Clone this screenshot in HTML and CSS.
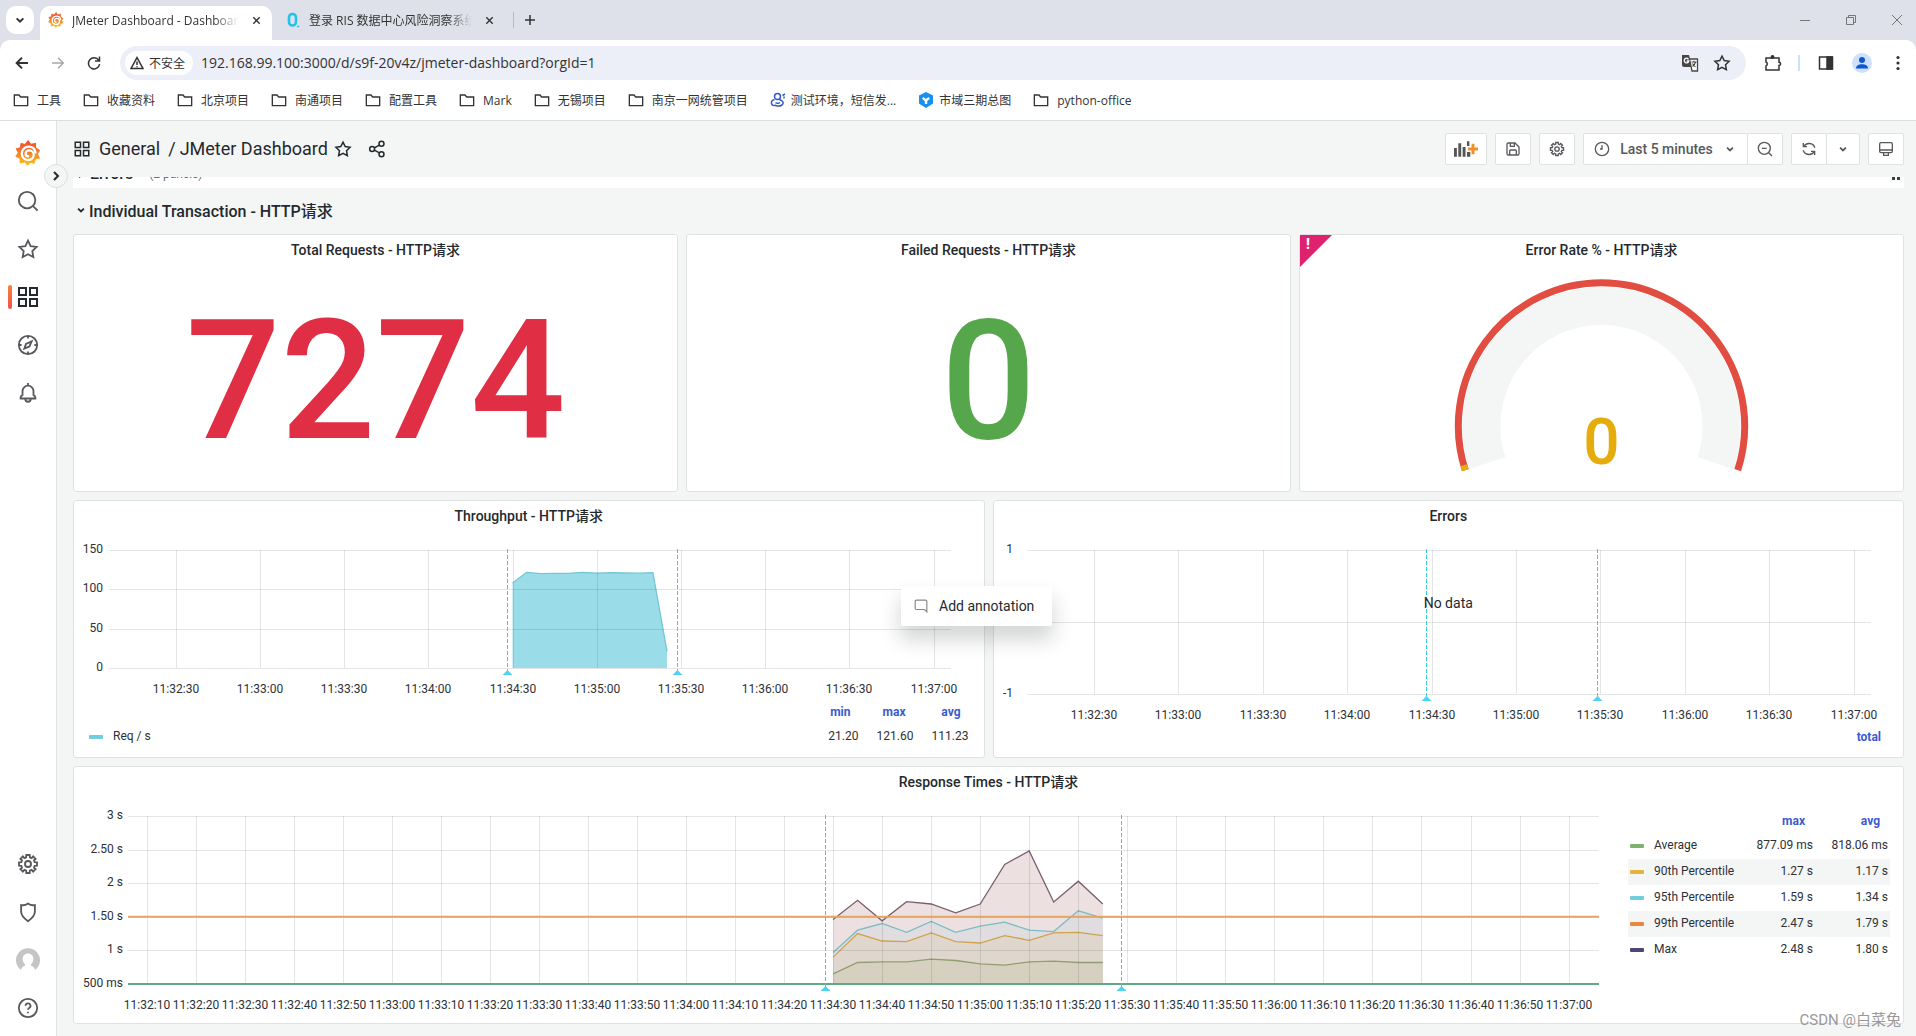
FILE: index.html
```html
<!DOCTYPE html>
<html lang="zh-CN">
<head>
<meta charset="utf-8">
<meta name="viewport" content="width=device-width, initial-scale=1">
<title>JMeter Dashboard - Dashboards - Grafana</title>
<link rel="stylesheet" href="styles.css">
</head>
<body>
<svg class="defs" aria-hidden="true">
  <defs>
    <linearGradient id="flame" x1="0" y1="0" x2="0" y2="1"><stop offset="0" stop-color="#e8502b"/><stop offset=".5" stop-color="#f37f2c"/><stop offset="1" stop-color="#fbc316"/></linearGradient>
    <symbol id="grafana" viewBox="0 0 24 24"><path fill="url(#flame)" stroke="url(#flame)" stroke-width="1" stroke-linejoin="round" d="M9.300 4.200 12.200.8 14.400 4 19 3.200 18.900 7.200 22.600 9.600 20.600 12.600 22.400 16.600 18.600 17.600 17.600 21.600 14.400 20.400 11.400 23.200 9.400 20 4.800 21.200 4.800 17 .9 15 3.200 11.800 1.200 8 5 7.200 5.600 3.200z"/><path fill="none" stroke="#fff" stroke-width="2.100" stroke-linecap="round" d="M19 11.600C18.300 7.800 15.400 6.200 12.700 6.200 8.800 6.200 6.300 9.300 6.300 12.500c0 3.500 2.600 6 5.800 6 3.100 0 5.200-2.300 5.200-4.800 0-2.600-2-4.200-4.200-4.200-1.900 0-3.300 1.500-3.300 3.100 0 1.500 1.100 2.400 2.300 2.400"/></symbol>
    <symbol id="search" viewBox="0 0 24 24"><circle cx="11" cy="11" r="9"/><path d="m17.500 17.500 5 5"/></symbol>
    <symbol id="star" viewBox="0 0 24 24"><path d="m12 2.800 2.900 6 6.500.9-4.700 4.600 1.100 6.500L12 17.700l-5.800 3.100 1.100-6.500L2.600 9.700l6.500-.9z"/></symbol>
    <symbol id="apps" viewBox="0 0 24 24"><path d="M3 3h7v7H3zM14 3h7v7h-7zM3 14h7v7H3zM14 14h7v7h-7z"/></symbol>
    <symbol id="compass" viewBox="0 0 24 24"><circle cx="12" cy="12" r="10"/><path d="M12 2v3M12 19v3M2 12h3M19 12h3M8 16l1.800-5.200L16 8l-2.400 5.600z"/></symbol>
    <symbol id="bell" viewBox="0 0 24 24"><path d="M12 1v3M6 15v-5a6 6 0 0 1 12 0v5M6 14.500a2.500 2.500 0 0 0-2 2.500V18h16v-1a2.500 2.500 0 0 0-2-2.500M9 18.500a3 3 0 0 0 6 0"/></symbol>
    <symbol id="cog" viewBox="0 0 24 24"><path d="M10.100 2.200 13.900 2.200 14 4.700 16 5.500 17.600 3.700 20.300 6.400 18.500 8 19.300 10 21.800 10.100 21.800 13.900 19.300 14 18.500 16 20.300 17.600 17.600 20.300 16 18.500 14 19.300 13.900 21.800 10.100 21.800 10 19.300 8 18.500 6.400 20.300 3.700 17.600 5.500 16 4.700 14 2.200 13.900 2.200 10.100 4.700 10 5.500 8 3.700 6.400 6.400 3.700 8 5.500 10 4.700z"/><circle cx="12" cy="12" r="3.300"/></symbol>
    <symbol id="shield" viewBox="0 0 24 24"><path d="M4.500 4.500c2.700.5 5.300-.1 7.500-1.700 2.200 1.600 4.800 2.200 7.500 1.700v7.300c0 4-2.800 7-7.500 10.200-4.700-3.200-7.500-6.200-7.500-10.200z"/></symbol>
    <symbol id="help" viewBox="0 0 24 24"><circle cx="12" cy="12" r="10"/><path d="M9.300 9.600a2.700 2.700 0 1 1 4 2.400c-.8.500-1.300.9-1.300 1.900M12 16.200v1.500"/></symbol>
    <symbol id="share" viewBox="0 0 24 24"><circle cx="5.500" cy="12" r="3.300"/><circle cx="18" cy="5" r="3.300"/><circle cx="18" cy="19" r="3.300"/><path d="m8.500 10.500 6.600-3.700M8.500 13.500l6.600 3.700"/></symbol>
    <symbol id="down" viewBox="0 0 24 24"><path d="m7 9.500 5 5 5-5"/></symbol>
    <symbol id="right" viewBox="0 0 24 24"><path d="m9 6 6 6-6 6"/></symbol>
    <symbol id="save" viewBox="0 0 24 24"><path d="M3 5a2 2 0 0 1 2-2h10l6 6v10a2 2 0 0 1-2 2H5a2 2 0 0 1-2-2zM8 3v5h6V3M7 21v-6a1.500 1.500 0 0 1 1.500-1.500h7A1.500 1.500 0 0 1 17 15v6"/></symbol>
    <symbol id="clock" viewBox="0 0 24 24"><circle cx="12" cy="12" r="10"/><path d="M12 6.500V12H9"/></symbol>
    <symbol id="zoomout" viewBox="0 0 24 24"><circle cx="11" cy="11" r="9"/><path d="m17.500 17.500 5 5M7.500 11h7"/></symbol>
    <symbol id="sync" viewBox="0 0 24 24"><path d="M3.500 3v5.500H9M4 8.500A9.200 9.200 0 0 1 20.800 10M20.500 21v-5.500H15M20 15.500A9.200 9.200 0 0 1 3.200 14"/></symbol>
    <symbol id="monitor" viewBox="0 0 24 24"><rect x="2.500" y="2.500" width="19" height="15" rx="2"/><path d="M2.500 13.500h19M8.500 17.500v4h7v-4"/></symbol>
    <symbol id="close" viewBox="0 0 24 24"><path d="m5 5 14 14M19 5 5 19"/></symbol>
    <symbol id="back" viewBox="0 0 24 24"><path d="M21 12H4M12 4l-8 8 8 8"/></symbol>
    <symbol id="folder" viewBox="0 0 24 24"><path d="M2 4.500h7l2.500 3H22v13H2z"/></symbol>
    <symbol id="comment" viewBox="0 0 24 24"><path d="M22 22l-4-4H4a2 2 0 0 1-2-2V4a2 2 0 0 1 2-2h16a2 2 0 0 1 2 2z"/></symbol>
  </defs>
</svg>

<header class="browser">
  <div class="tabstrip">
    <button class="tab-search" aria-label="搜索标签页"><svg class="icon i16 heavy"><use href="#down"/></svg></button>
    <div class="tab tab-active">
      <svg class="i16"><use href="#grafana"/></svg>
      <span class="tab-title">JMeter Dashboard - Dashboards - Grafana</span>
      <button class="bare" aria-label="关闭"><svg class="icon i11 heavy"><use href="#close"/></svg></button>
    </div>
    <div class="tab tab-idle">
      <svg class="i16" viewBox="0 0 16 16"><rect x="4" y="2" width="7" height="11.500" rx="3.500" fill="none" stroke="#20c4e8" stroke-width="2.600"/><circle cx="13.200" cy="14.500" r="1" fill="#20c4e8"/></svg>
      <span class="tab-title">登录 RIS 数据中心风险洞察系统</span>
      <button class="bare" aria-label="关闭"><svg class="icon i11 heavy"><use href="#close"/></svg></button>
    </div>
    <span class="tab-divider"></span>
    <button class="bare new-tab" aria-label="新标签页"><svg class="icon i12" viewBox="0 0 12 12"><path d="M6 1v10M1 6h10"/></svg></button>
    <div class="window-controls">
      <button class="bare" aria-label="最小化"><svg class="icon i12 thin" viewBox="0 0 12 12"><path d="M1 6.500h10"/></svg></button>
      <button class="bare" aria-label="还原"><svg class="icon i12 thin" viewBox="0 0 12 12"><path d="M1.500 3.500h7v7h-7zM3.500 3.500v-2h7v7h-2"/></svg></button>
      <button class="bare" aria-label="关闭窗口"><svg class="icon i12 thin" viewBox="0 0 12 12"><path d="m1 1 10 10M11 1 1 11"/></svg></button>
    </div>
  </div>
  <div class="navbar">
    <div class="nav-buttons">
      <button class="bare" aria-label="后退"><svg class="icon i16 heavy"><use href="#back"/></svg></button>
      <button class="bare faded" aria-label="前进"><svg class="icon i16 flip"><use href="#back"/></svg></button>
      <button class="bare" aria-label="重新加载"><svg class="icon i16" viewBox="0 0 16 16"><path d="M12.700 5.200A5.600 5.600 0 1 0 13.600 9M13.500 1.500V6H9"/></svg></button>
    </div>
    <div class="omnibox">
      <span class="security"><svg class="icon i14" viewBox="0 0 14 14"><path d="M7 1.600 13 12.500H1zM7 5.500v3.600M7 10.200v1.100"/></svg>不安全</span>
      <input class="url" type="text" aria-label="地址" value="192.168.99.100:3000/d/s9f-20v4z/jmeter-dashboard?orgId=1">
      <button class="bare" aria-label="翻译"><svg class="i18" viewBox="0 0 18 18"><path fill="#474747" d="M1 1h7l3 12H3a2 2 0 0 1-2-2z"/><path fill="#fff" stroke="#474747" stroke-width="1.300" d="M8.500 5h8v12H11z"/><path fill="none" stroke="#fff" stroke-width="1.300" d="M7.500 5.300A2.300 2.300 0 1 0 7.800 7H5.700"/><path fill="none" stroke="#474747" stroke-width="1.100" d="M10.500 8h5M13 6.800V8M14.500 8c-.5 2-1.600 3.500-3 4.500M11.500 9.500c.8 1.500 1.800 2.500 3 3.200"/></svg></button>
      <button class="bare" aria-label="收藏"><svg class="icon i18"><use href="#star"/></svg></button>
    </div>
    <div class="extensions">
      <button class="bare" aria-label="扩展程序"><svg class="icon i18" viewBox="0 0 18 18"><path d="M2 4h13v4.200a1.600 1.600 0 0 1 0 3.200V16H2v-4a2.200 2.200 0 0 0 0-4z"/><circle cx="8.500" cy="3" r="1.200" fill="currentColor"/></svg></button>
      <span class="tool-divider"></span>
      <button class="bare" aria-label="侧边栏"><svg class="icon i16" viewBox="0 0 16 16"><path d="M1.500 2h13v12h-13z"/><path fill="currentColor" d="M9 2h5v12H9z"/></svg></button>
      <button class="bare" aria-label="用户"><svg class="i20" viewBox="0 0 20 20"><circle cx="10" cy="10" r="10" fill="#cfe0fb"/><circle cx="10" cy="7" r="3" fill="#0b57d0"/><path fill="#0b57d0" d="M4 15.500c0-3 3-4.200 6-4.200s6 1.200 6 4.200z"/></svg></button>
      <button class="bare" aria-label="菜单"><svg class="i16" viewBox="0 0 16 16" fill="#333"><circle cx="8" cy="2.500" r="1.600"/><circle cx="8" cy="8" r="1.600"/><circle cx="8" cy="13.500" r="1.600"/></svg></button>
    </div>
  </div>
  <nav class="bookmarks" aria-label="书签">
    <a href="#"><svg class="icon i16"><use href="#folder"/></svg>工具</a>
    <a href="#"><svg class="icon i16"><use href="#folder"/></svg>收藏资料</a>
    <a href="#"><svg class="icon i16"><use href="#folder"/></svg>北京项目</a>
    <a href="#"><svg class="icon i16"><use href="#folder"/></svg>南通项目</a>
    <a href="#"><svg class="icon i16"><use href="#folder"/></svg>配置工具</a>
    <a href="#"><svg class="icon i16"><use href="#folder"/></svg>Mark</a>
    <a href="#"><svg class="icon i16"><use href="#folder"/></svg>无锡项目</a>
    <a href="#"><svg class="icon i16"><use href="#folder"/></svg>南京一网统管项目</a>
    <a class="site" href="#"><svg class="i16" viewBox="0 0 16 16" fill="none" stroke="#3656c9" stroke-width="1.500"><circle cx="7.500" cy="4.500" r="3"/><path d="M4.500 7.500C2 8 1 9.500 1.500 11.500S4 14 5.500 13.300c2 1 4.500 1 6.500-.3 1.500-1.200 1.500-3.200 0-4.200L9.500 7.500M5.500 10.500c1.500 1.200 3 1.200 4.500 0"/><path d="M12.500 3.500 15 2M14 4.500v2"/></svg>测试环境，短信发...</a>
    <a class="site" href="#"><svg class="i16" viewBox="0 0 16 16"><path fill="#1890f0" d="m8 0 7 3.500v8L8 16l-7-4.500v-8z"/><path fill="none" stroke="#fff" stroke-width="2.400" d="M8 12V8.500L4.800 5.800M8 8.500l3.200-2.700"/></svg>市域三期总图</a>
    <a href="#"><svg class="icon i16"><use href="#folder"/></svg>python-office</a>
  </nav>
</header>

<div class="app">
  <aside class="sidebar">
    <nav class="side-group">
      <a href="#" aria-label="Grafana"><svg class="i26"><use href="#grafana"/></svg></a>
      <a href="#" aria-label="Search"><svg class="icon i22"><use href="#search"/></svg></a>
      <a href="#" aria-label="Starred"><svg class="icon i22"><use href="#star"/></svg></a>
      <a class="current" href="#" aria-label="Dashboards"><svg class="icon i24"><use href="#apps"/></svg></a>
      <a href="#" aria-label="Explore"><svg class="icon i22"><use href="#compass"/></svg></a>
      <a href="#" aria-label="Alerting"><svg class="icon i22"><use href="#bell"/></svg></a>
    </nav>
    <nav class="side-group">
      <a href="#" aria-label="Configuration"><svg class="icon i22"><use href="#cog"/></svg></a>
      <a href="#" aria-label="Server admin"><svg class="icon i22"><use href="#shield"/></svg></a>
      <a href="#" aria-label="Profile"><svg class="i24" viewBox="0 0 24 24"><path fill="#c5c5c5" d="M5 22A12 12 0 1 1 19 22c-.5-2.500-1.700-3.500-4-4.200v-1.600c1.500-1.200 2.300-3 2.300-5.200 0-3.200-2-5.500-5.300-5.500S6.700 7.800 6.700 11c0 2.200.8 4 2.300 5.200v1.600C6.700 18.500 5.500 19.500 5 22z"/></svg></a>
      <a href="#" aria-label="Help"><svg class="icon i22"><use href="#help"/></svg></a>
    </nav>
    <button class="expand" aria-label="Expand menu"><svg class="icon i16 bold"><use href="#right"/></svg></button>
  </aside>

  <main class="dashboard">
    <div class="toolbar">
      <svg class="icon i18"><use href="#apps"/></svg>
      <h1 class="crumbs"><a href="#">General</a><span>/</span><a href="#">JMeter Dashboard</a></h1>
      <button class="bare" aria-label="Mark as favorite"><svg class="icon i18"><use href="#star"/></svg></button>
      <button class="bare share" aria-label="Share"><svg class="icon i18"><use href="#share"/></svg></button>
      <div class="actions">
        <button class="btn btn-add" aria-label="Add panel"><svg class="i24" viewBox="0 0 25 16"><path fill="#555" d="M0 7h3v9H0zM4.500 2h3v14h-3zM9 6h3v10H9zM13.500 0H16v5h-2.500zM13.500 11H17v5h-3.500z"/><path fill="#f0912b" d="M18.300 2.500h3v4H25v3h-3.700v4h-3v-4h-3.800v-3h3.800z"/></svg></button>
        <button class="btn" aria-label="Save dashboard"><svg class="icon i16"><use href="#save"/></svg></button>
        <button class="btn" aria-label="Dashboard settings"><svg class="icon i16"><use href="#cog"/></svg></button>
        <div class="btn-group">
          <button class="btn btn-time"><svg class="icon i16"><use href="#clock"/></svg><span>Last 5 minutes</span><svg class="icon i14 heavy"><use href="#down"/></svg></button>
          <button class="btn" aria-label="Zoom out"><svg class="icon i16"><use href="#zoomout"/></svg></button>
        </div>
        <div class="btn-group">
          <button class="btn" aria-label="Refresh"><svg class="icon i16"><use href="#sync"/></svg></button>
          <button class="btn btn-narrow" aria-label="Refresh interval"><svg class="icon i14 heavy"><use href="#down"/></svg></button>
        </div>
        <button class="btn" aria-label="Cycle view mode"><svg class="icon i16"><use href="#monitor"/></svg></button>
      </div>
    </div>

    <div class="scroll">
      <div class="row-collapsed"><svg class="icon i14"><use href="#right"/></svg><span class="row-name">Errors</span><span class="row-count">(2 panels)</span><span class="grip"><i></i><i></i><i></i><i></i></span></div>
      <button class="row-title"><svg class="icon i14 heavy"><use href="#down"/></svg>Individual Transaction - HTTP请求</button>

      <div class="panels thirds">
        <section class="panel">
          <h2>Total Requests - HTTP请求</h2>
          <p class="stat red">7274</p>
        </section>
        <section class="panel">
          <h2>Failed Requests - HTTP请求</h2>
          <p class="stat green">0</p>
        </section>
        <section class="panel">
          <span class="alert-corner">!</span>
          <h2>Error Rate % - HTTP请求</h2>
          <svg class="gauge" viewBox="0 0 300 224" role="img" aria-label="Error rate 0">
            <g fill="none" transform="translate(150 159)">
              <path stroke="#f4f5f5" stroke-width="38" d="M-114.100 37.100A120 120 0 1 1 114.100 37.100"/>
              <path stroke="#e24d42" stroke-width="7" d="M-136.200 44.200A143.200 143.200 0 1 1 136.200 44.200"/>
              <path stroke="#e5ac0e" stroke-width="7" d="M-136.200 44.200-137.700 39.300"/>
            </g>
            <text x="150" y="197" text-anchor="middle">0</text>
          </svg>
        </section>
      </div>

      <div class="panels halves">
        <section class="panel">
          <h2>Throughput - HTTP请求</h2>
          <svg class="chart chart-throughput" data-chart="throughput"></svg>
          <table class="legend legend-wide">
            <thead><tr><th></th><th>min</th><th>max</th><th>avg</th></tr></thead>
            <tbody><tr><td><span class="swatch teal"></span>Req / s</td><td>21.20</td><td>121.60</td><td>111.23</td></tr></tbody>
          </table>
        </section>
        <section class="panel">
          <h2>Errors</h2>
          <div class="chart-wrap">
            <svg class="chart chart-errors" data-chart="errors"></svg>
            <span class="no-data">No data</span>
          </div>
          <table class="legend legend-total">
            <thead><tr><th></th><th>total</th></tr></thead>
          </table>
        </section>
      </div>

      <div class="panels">
        <section class="panel">
          <h2>Response Times - HTTP请求</h2>
          <div class="split">
            <svg class="chart chart-response" data-chart="response"></svg>
            <table class="legend legend-side">
              <thead><tr><th></th><th>max</th><th>avg</th></tr></thead>
              <tbody>
                <tr><td><span class="swatch sage"></span>Average</td><td>877.09 ms</td><td>818.06 ms</td></tr>
                <tr><td><span class="swatch gold"></span>90th Percentile</td><td>1.27 s</td><td>1.17 s</td></tr>
                <tr><td><span class="swatch teal"></span>95th Percentile</td><td>1.59 s</td><td>1.34 s</td></tr>
                <tr><td><span class="swatch orange"></span>99th Percentile</td><td>2.47 s</td><td>1.79 s</td></tr>
                <tr><td><span class="swatch violet"></span>Max</td><td>2.48 s</td><td>1.80 s</td></tr>
              </tbody>
            </table>
          </div>
        </section>
      </div>
    </div>
  </main>
</div>

<div class="context-menu" role="menu">
  <button role="menuitem"><svg class="icon i14"><use href="#comment"/></svg>Add annotation</button>
</div>
<span class="credit">CSDN @白菜兔</span>
<script src="charts.js"></script>
</body>
</html>
```

FILE: styles.css
```css
* { box-sizing: border-box; }

body {
  margin: 0;
  min-height: 100vh;
  display: flex;
  flex-direction: column;
  position: relative;
  font-family: Roboto, "Noto Sans CJK SC", sans-serif;
  font-size: 14px;
  color: #24292e;
  background: #f4f5f5;
}

a { color: inherit; text-decoration: none; }
h1, h2, p { margin: 0; font-weight: 500; }
button { font: inherit; color: inherit; margin: 0; }
svg { display: block; flex: none; }

.defs { position: absolute; width: 0; height: 0; }
.icon { fill: none; stroke: currentColor; stroke-width: 2; }
.icon[viewBox] { stroke-width: 1.5; }
.icon.heavy { stroke-width: 3; }
.icon.bold { stroke-width: 3; }
.icon.thin { stroke-width: 1; }
.flip { transform: scaleX(-1); }
.i11 { width: 11px; height: 11px; }
.i12 { width: 12px; height: 12px; }
.i14 { width: 14px; height: 14px; }
.i16 { width: 16px; height: 16px; }
.i18 { width: 18px; height: 18px; }
.i20 { width: 20px; height: 20px; }
.i22 { width: 22px; height: 22px; }
.i24 { width: 24px; height: 24px; }
.i26 { width: 26px; height: 26px; }

.bare {
  border: 0;
  padding: 0;
  background: none;
  display: flex;
}

/* Browser frame */
.browser {
  font-family: "Open Sans", "Noto Sans CJK SC", sans-serif;
  font-size: 12px;
  color: #333;
  background: #dee1e9;
}
.tabstrip {
  display: flex;
  align-items: center;
  height: 40px;
  padding: 0 13px 0 6px;
}
.tab-search {
  width: 28px;
  height: 28px;
  display: grid;
  place-items: center;
  border: 0;
  border-radius: 10px;
  padding: 0;
  margin-right: 6px;
  background: #fff;
}
.tab {
  width: 232px;
  height: 34px;
  align-self: flex-end;
  display: flex;
  align-items: center;
  gap: 8px;
  padding: 0 10px 6px 8px;
}
.tab-active { background: #fff; border-radius: 10px 10px 0 0; }
.tab-idle { width: 228px; margin-left: 5px; }
.tab-title {
  flex: 1;
  overflow: hidden;
  white-space: nowrap;
  mask-image: linear-gradient(90deg, #000 85%, transparent);
}
.tab .bare { margin-left: 4px; }
.tab-divider { width: 1px; height: 16px; margin: 0 10px 0 8px; background: #b4b9c4; }
.window-controls { display: flex; gap: 34px; margin-left: auto; color: #777; }

.navbar {
  display: flex;
  align-items: center;
  height: 40px;
  padding: 6px 10px 0 14px;
  background: #fff;
  border-radius: 10px 10px 0 0;
}
.nav-buttons { display: flex; gap: 20px; }
.faded { color: #a5a5a5; }
.omnibox {
  flex: 1;
  display: flex;
  align-items: center;
  height: 34px;
  gap: 14px;
  margin: 0 18px;
  padding: 0 15px 0 5px;
  border-radius: 17px;
  background: #eceff8;
}
.security {
  display: flex;
  align-items: center;
  gap: 5px;
  height: 24px;
  padding: 0 8px 0 5px;
  border-radius: 12px;
  background: #fff;
}
.url {
  flex: 1;
  border: 0;
  padding: 0 0 2px;
  margin-left: -6px;
  font-family: inherit;
  font-size: 14px;
  color: #333;
  background: none;
}
.extensions { display: flex; align-items: center; gap: 18px; }
.tool-divider { width: 2px; height: 16px; margin-left: -2px; background: #cfe0fb; }
.bookmarks {
  display: flex;
  align-items: center;
  gap: 22px;
  height: 41px;
  padding: 0 13px;
  background: #fff;
  border-bottom: 1px solid #dcdfe0;
}
.bookmarks a { display: flex; align-items: center; gap: 8px; white-space: nowrap; }
.bookmarks .site { gap: 5px; }

/* Application frame */
.app { flex: 1; display: flex; }
.sidebar {
  position: relative;
  width: 57px;
  display: flex;
  flex-direction: column;
  justify-content: space-between;
  padding: 8px 0 4px;
  background: #fff;
  border-right: 1px solid #e0e2e3;
  color: #57595c;
}
.side-group a { display: grid; place-items: center; height: 48px; position: relative; }
.side-group .current { color: #24292e; }
.current::before {
  content: "";
  position: absolute;
  left: 8px;
  top: 12px;
  width: 4px;
  height: 24px;
  border-radius: 2px;
  background: linear-gradient(#f8813c, #f2524c);
}
.expand {
  position: absolute;
  top: 43px;
  right: -12px;
  width: 24px;
  height: 24px;
  display: grid;
  place-items: center;
  padding: 0;
  border: 1px solid #dcdfe0;
  border-radius: 50%;
  color: #24292e;
  background: #f4f5f5;
}
.dashboard { flex: 1; min-width: 0; padding: 0 12px 12px 16px; }
.toolbar { display: flex; align-items: center; height: 56px; }
.crumbs { display: flex; gap: 8px; margin: 0 6px 0 8px; padding-bottom: 2px; font-size: 18px; font-weight: 400; }
.crumbs span { margin-right: -4px; }
.share { margin-left: 16px; }
.actions { display: flex; gap: 8px; margin-left: auto; color: #57595c; }
.btn {
  width: 36px;
  height: 32px;
  display: flex;
  align-items: center;
  justify-content: center;
  gap: 10px;
  padding: 0;
  border: 1px solid #dfe1e2;
  border-radius: 2px;
  background: #fff;
  font-weight: 500;
}
.btn-group { display: flex; }
.btn-group .btn + .btn { margin-left: -1px; }
.btn-add { width: 42px; }
.btn-time { width: 165px; }
.btn-narrow { width: 34px; }

.scroll { overflow: hidden; }
.row-collapsed {
  display: flex;
  align-items: center;
  height: 31px;
  margin-top: -20px;
  padding: 2px 4px 0 1px;
  background: #fff;
}
.row-name { margin-left: 2px; font-size: 16px; font-weight: 500; }
.row-count { flex: 1; margin-left: 16px; font-size: 12px; color: #6a6d70; }
.grip { display: grid; grid-template-columns: 3px 3px; gap: 2px; margin-top: 4px; }
.grip i { width: 3px; height: 3px; background: #3b3e40; }
.row-title {
  display: flex;
  align-items: center;
  gap: 1px;
  height: 46px;
  padding: 0 1px 2px;
  border: 0;
  background: none;
  font-size: 16px;
  font-weight: 500;
}

.panels { display: grid; gap: 8px; margin-bottom: 8px; }
.panels:last-child { margin-bottom: 0; }
.thirds { grid-template-columns: repeat(3, 1fr); }
.halves { grid-template-columns: repeat(2, 1fr); }
.panel {
  position: relative;
  display: flex;
  flex-direction: column;
  min-width: 0;
  height: 258px;
  border: 1px solid #dfe2e3;
  border-radius: 3px;
  background: #fff;
}
.panel h2 { padding-bottom: 2px; font-size: 14px; line-height: 30px; text-align: center; }
.stat { padding-top: 2px; font-size: 167px; line-height: 224px; text-align: center; }
.red { color: #e02f44; }
.green { color: #56a64b; }
.gauge { width: 100%; height: 224px; }
.gauge text { font-size: 64px; font-weight: 500; fill: #e5ac0e; }
.alert-corner {
  position: absolute;
  left: 0;
  top: 0;
  width: 32px;
  height: 32px;
  padding-left: 6px;
  font-size: 14px;
  line-height: 18px;
  font-weight: 900;
  color: #fff;
  background: #e0226e;
  clip-path: polygon(0 0, 100% 0, 0 100%);
}

/* Charts */
.chart { width: 100%; }
.chart text { font-size: 12px; fill: #2c3136; }
.chart .tick { text-anchor: middle; }
.chart .value { text-anchor: end; }
.chart .grid { stroke: #000; stroke-opacity: .1; shape-rendering: crispEdges; }
.chart .event { stroke: #35cfe6; stroke-dasharray: 4 2; shape-rendering: crispEdges; }
.chart .event-mark { fill: #4bd5ee; }
.chart-throughput { height: 167px; }
.chart-errors { height: 190px; }
.chart-response { flex: 1; width: auto; min-width: 0; height: 223px; }
.chart-wrap { display: grid; place-items: center; }
.chart-wrap > * { grid-area: 1 / 1; }
.no-data { padding-bottom: 50px; }
.split { display: flex; gap: 14px; padding-right: 13px; }

.legend { border-collapse: collapse; font-size: 12px; line-height: 16px; color: #2c3136; }
.legend th, .legend td { padding: 4px 2px 6px; text-align: right; font-weight: 400; white-space: nowrap; }
.legend th { padding-right: 10px; font-weight: 700; color: #3a5bd0; }
.legend td:first-child { text-align: left; }
.legend-wide { margin: 0 13px; }
.legend-wide th, .legend-wide td { width: 55px; padding-top: 4px; padding-bottom: 4px; }
.legend-wide th:first-child, .legend-wide td:first-child { width: auto; }
.legend-total { margin: 2px 12px 0; }
.legend-side { flex: none; width: 262px; margin-top: 10px; align-self: flex-start; }
.legend-side th, .legend-side td { width: 75px; }
.legend-side th:first-child, .legend-side td:first-child { width: auto; }
.legend-side th { padding-top: 4px; padding-bottom: 4px; }
.legend-side tbody tr:nth-child(even) { background: #f4f5f5; }
.swatch {
  display: inline-block;
  width: 14px;
  height: 4px;
  margin-right: 10px;
  border-radius: 1px;
  vertical-align: 1px;
}
.teal { background: #70cddb; }
.sage { background: #7eb26d; }
.gold { background: #e5b43c; }
.orange { background: #ea8842; }
.violet { background: #51447a; }

/* Floating items */
.context-menu {
  position: absolute;
  left: 901px;
  top: 586px;
  border-radius: 2px;
  background: #fff;
  box-shadow: 0 13px 20px 1px rgba(24, 26, 27, .18);
}
.context-menu button {
  display: flex;
  align-items: center;
  gap: 11px;
  width: 151px;
  height: 40px;
  padding: 0 13px;
  border: 0;
  background: none;
  white-space: nowrap;
}
.context-menu svg { color: #858789; }
.credit {
  position: absolute;
  right: 15px;
  bottom: 4px;
  font-size: 15px;
  line-height: 24px;
  color: #999;
}
```

FILE: charts.js
```js
const NS = "http://www.w3.org/2000/svg";

// Seconds are counted from the left edge of the five-minute window.
const WINDOW = 300;
const START = 11 * 3600 + 32 * 60 + 6.2;
const FIRST_SAMPLE = 143.8;
const EVENTS = [142.3, 202.8];

const charts = {
  throughput: {
    left: 35, right: 33, top: 17, bottom: 135, labelGap: 6,
    min: 0, max: 150, step: 30,
    values: [[150, "150"], [100, "100"], [50, "50"], [0, "0"]],
    series: [
      { fill: "#9adde9", line: "#74c6d4", data: [108, 121.6, 120, 120.2, 120.4, 121.5, 120.6, 121.2, 120.8, 120.5, 121.3, 21.2] }
    ]
  },
  errors: {
    left: 33, right: 33, top: 17, bottom: 161, labelGap: 14,
    min: -1, max: 1, step: 30,
    values: [[1, "1"], [0, ""], [-1, "-1"]],
    series: []
  },
  response: {
    left: 54, right: 15, top: 17, bottom: 185, labelGap: 5,
    min: 0.5, max: 3, step: 10,
    values: [[3, "3 s"], [2.5, "2.50 s"], [2, "2 s"], [1.5, "1.50 s"], [1, "1 s"], [0.5, "500 ms"]],
    series: [
      { fill: "#ece0e0", line: "#7b5f70", data: [1.46, 1.745, 1.44, 1.725, 1.69, 1.56, 1.69, 2.28, 2.48, 1.72, 2.03, 1.69] },
      { fill: "#e0dde0", line: "#7dbbc5", data: [0.97, 1.3, 1.4, 1.27, 1.43, 1.27, 1.36, 1.42, 1.3, 1.28, 1.59, 1.48] },
      { fill: "#dfd7ce", line: "#d0a34c", data: [0.9, 1.25, 1.14, 1.13, 1.26, 1.13, 1.11, 1.22, 1.15, 1.26, 1.27, 1.22] },
      { fill: "#d6d0c0", line: "#8f9f70", data: [0.65, 0.82, 0.83, 0.83, 0.87, 0.85, 0.8, 0.78, 0.83, 0.84, 0.82, 0.82] }
    ],
    thresholds: [[1.5, "#e6a561"], [0.5, "#5fa987"]]
  }
};

function add(svg, name, attrs, text) {
  const node = document.createElementNS(NS, name);
  for (const key in attrs) node.setAttribute(key, attrs[key]);
  if (text) node.textContent = text;
  svg.appendChild(node);
}

function clock(seconds) {
  return [seconds / 3600, seconds / 60 % 60, seconds % 60]
    .map(part => String(Math.floor(part)).padStart(2, "0")).join(":");
}

function draw(svg) {
  const c = charts[svg.dataset.chart];
  const end = Math.round(svg.getBoundingClientRect().width) - c.right;
  const x = t => c.left + t / WINDOW * (end - c.left);
  const y = v => c.bottom - (v - c.min) / (c.max - c.min) * (c.bottom - c.top);
  svg.replaceChildren();

  for (const s of c.series) {
    const points = s.data.map((v, i) => x(FIRST_SAMPLE + i * 5).toFixed(1) + "," + y(v).toFixed(1));
    const last = x(FIRST_SAMPLE + (s.data.length - 1) * 5);
    add(svg, "polygon", { points: `${x(FIRST_SAMPLE)},${c.bottom} ${points.join(" ")} ${last},${c.bottom}`, fill: s.fill });
    add(svg, "polyline", { points: points.join(" "), fill: "none", stroke: s.line, "stroke-width": 1.3 });
  }

  for (const [v, label] of c.values) {
    const line = Math.round(y(v)) + 0.5;
    add(svg, "line", { class: "grid", x1: c.left, x2: end, y1: line, y2: line });
    add(svg, "text", { class: "value", x: c.left - c.labelGap, y: Math.round(y(v)) + 3 }, label);
  }

  const first = Math.ceil(START / c.step) * c.step;
  for (let t = first; t < START + WINDOW; t += c.step) {
    const at = Math.round(x(t - START));
    add(svg, "line", { class: "grid", x1: at + 0.5, x2: at + 0.5, y1: c.top, y2: c.bottom });
    add(svg, "text", { class: "tick", x: at, y: c.bottom + 25 }, clock(t));
  }

  for (const [v, color] of c.thresholds || []) {
    add(svg, "line", { x1: c.left, x2: end, y1: y(v), y2: y(v), stroke: color, "stroke-width": 2 });
  }

  for (const t of EVENTS) {
    const at = Math.round(x(t)) - 0.5;
    add(svg, "line", { class: "event", x1: at, x2: at, y1: c.top - 1, y2: c.bottom + 3 });
    add(svg, "path", { class: "event-mark", d: `M${at - 5} ${c.bottom + 7}l5-5 5 5z` });
  }
}

function drawAll() {
  document.querySelectorAll("[data-chart]").forEach(draw);
}

drawAll();
window.addEventListener("resize", drawAll);
```
